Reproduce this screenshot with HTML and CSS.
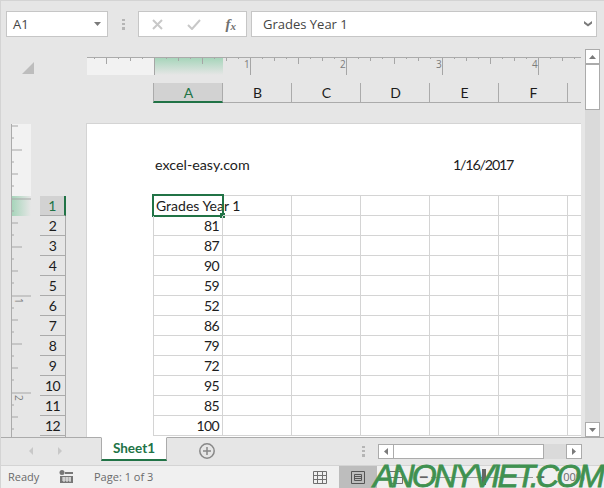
FILE: index.html
```html
<!DOCTYPE html>
<html lang="en">
<head>
<meta charset="utf-8">
<title>excel-easy</title>
<link rel="stylesheet" href="styles.css">
</head>
<body>
<div class="app">
  <div class="formula-bar">
    <div class="name-box"><span>A1</span><svg class="caret" width="7" height="4" viewBox="0 0 7 4"><path d="M0 0h7L3.5 4z"/></svg></div>
    <svg class="grip" width="3" height="11" viewBox="0 0 3 11"><path d="M0 0h3v2H0zM0 4h3v2H0zM0 8h3v3H0z"/></svg>
    <div class="fx-buttons">
      <svg width="11" height="11" viewBox="0 0 11 11"><path d="M1 1l9 9M10 1l-9 9" class="ico-off"/></svg>
      <svg width="14" height="11" viewBox="0 0 14 11"><path d="M1 6l4 4 8-9" class="ico-off"/></svg>
      <span class="fx">f<sub>x</sub></span>
    </div>
    <div class="formula-input"><span>Grades Year 1</span><svg width="8" height="6" viewBox="0 0 8 6"><path d="M0 0l4 3 4-3v2.500l-4 3-4-3z"/></svg></div>
  </div>

  <div class="workspace">
    <div class="corner"><svg width="12" height="12" viewBox="0 0 12 12"><path d="M12 0v12H0z"/></svg></div>
    <div class="h-ruler">
      <svg width="495" height="18" viewBox="0 0 495 18">
        <defs>
          <pattern id="ht" x="68" y="0" width="96" height="18" patternUnits="userSpaceOnUse">
            <path d="M.5 0v18M48.500 0v7M24.500 0v4M72.500 0v4M12.500 0v2M36.500 0v2M60.500 0v2M84.500 0v2" stroke="#a6a6a6" fill="none"/>
          </pattern>
          <linearGradient id="hg" x1="0" y1="0" x2="0" y2="1"><stop offset="0" stop-color="#a3d4b8"/><stop offset="1" stop-color="#e6e6e6"/></linearGradient>
        </defs>
        <rect x="1" y="0" width="67" height="18" fill="#f2f2f2"/>
        <rect x="68" y="0" width="69" height="18" fill="url(#hg)"/>
        <rect x="1" y="0" width="494" height="18" fill="url(#ht)"/>
        <path d="M1 .5h494" stroke="#ababab"/>
        <text x="158" y="11">1</text><text x="254" y="11">2</text><text x="350" y="11">3</text><text x="446" y="11">4</text>
      </svg>
    </div>
    <div class="col-heads">
      <div class="col-head active">A</div><div class="col-head">B</div><div class="col-head">C</div><div class="col-head">D</div><div class="col-head">E</div><div class="col-head">F</div><div class="col-head rest"></div>
    </div>
    <div class="v-ruler">
      <svg width="20" height="314" viewBox="0 0 20 314">
        <defs>
          <pattern id="vt" x="0" y="75.500" width="20" height="97" patternUnits="userSpaceOnUse">
            <path d="M0 .5h20M0 48.500h11M0 24.500h7M0 72.500h7M0 12.500h3M0 36.500h3M0 60.500h3M0 84.500h3" stroke="#a6a6a6" fill="none"/>
          </pattern>
          <linearGradient id="vg"><stop offset="0" stop-color="#a3d4b8"/><stop offset="1" stop-color="#e6e6e6"/></linearGradient>
        </defs>
        <rect x="0" y="1" width="20" height="72" fill="#f2f2f2"/>
        <rect x="0" y="73" width="20" height="20" fill="url(#vg)"/>
        <rect x="0" y="1" width="20" height="313" fill="url(#vt)"/>
        <path d="M.5 1v313" stroke="#ababab"/>
        <text transform="translate(4 175) rotate(90)">1</text>
        <text transform="translate(4 272) rotate(90)">2</text>
      </svg>
    </div>
    <div class="row-heads">
      <div class="row-head active">1</div><div class="row-head">2</div><div class="row-head">3</div><div class="row-head">4</div><div class="row-head">5</div><div class="row-head">6</div><div class="row-head">7</div><div class="row-head">8</div><div class="row-head">9</div><div class="row-head">10</div><div class="row-head">11</div><div class="row-head">12</div><div class="row-head"></div>
    </div>
    <div class="page">
      <div class="page-header"><span class="site">excel-easy.com</span><span class="date">1/16/2017</span></div>
      <div class="sheet">
        <div class="cell title">Grades Year 1<div class="selection"><i class="handle"></i></div></div><div class="cell"></div><div class="cell"></div><div class="cell"></div><div class="cell"></div><div class="cell"></div><div class="cell"></div>
        <div class="cell num">81</div><div class="cell"></div><div class="cell"></div><div class="cell"></div><div class="cell"></div><div class="cell"></div><div class="cell"></div>
        <div class="cell num">87</div><div class="cell"></div><div class="cell"></div><div class="cell"></div><div class="cell"></div><div class="cell"></div><div class="cell"></div>
        <div class="cell num">90</div><div class="cell"></div><div class="cell"></div><div class="cell"></div><div class="cell"></div><div class="cell"></div><div class="cell"></div>
        <div class="cell num">59</div><div class="cell"></div><div class="cell"></div><div class="cell"></div><div class="cell"></div><div class="cell"></div><div class="cell"></div>
        <div class="cell num">52</div><div class="cell"></div><div class="cell"></div><div class="cell"></div><div class="cell"></div><div class="cell"></div><div class="cell"></div>
        <div class="cell num">86</div><div class="cell"></div><div class="cell"></div><div class="cell"></div><div class="cell"></div><div class="cell"></div><div class="cell"></div>
        <div class="cell num">79</div><div class="cell"></div><div class="cell"></div><div class="cell"></div><div class="cell"></div><div class="cell"></div><div class="cell"></div>
        <div class="cell num">72</div><div class="cell"></div><div class="cell"></div><div class="cell"></div><div class="cell"></div><div class="cell"></div><div class="cell"></div>
        <div class="cell num">95</div><div class="cell"></div><div class="cell"></div><div class="cell"></div><div class="cell"></div><div class="cell"></div><div class="cell"></div>
        <div class="cell num">85</div><div class="cell"></div><div class="cell"></div><div class="cell"></div><div class="cell"></div><div class="cell"></div><div class="cell"></div>
        <div class="cell num">100</div><div class="cell"></div><div class="cell"></div><div class="cell"></div><div class="cell"></div><div class="cell"></div><div class="cell"></div>
      </div>
    </div>
    <div class="v-scroll">
      <div class="sb-btn"><svg width="7" height="4" viewBox="0 0 7 4"><path d="M3.500 0L7 4H0z"/></svg></div>
      <div class="sb-thumb"></div>
      <div class="sb-track"></div>
      <div class="sb-btn"><svg width="7" height="4" viewBox="0 0 7 4"><path d="M0 0h7L3.500 4z"/></svg></div>
    </div>
  </div>

  <div class="tabs">
    <div class="tab-nav">
      <svg width="4" height="8" viewBox="0 0 4 8"><path d="M4 0v8L0 4z"/></svg>
      <svg width="4" height="8" viewBox="0 0 4 8"><path d="M0 0v8l4-4z"/></svg>
    </div>
    <div class="tab">Sheet1</div>
    <svg class="add" width="16" height="16" viewBox="0 0 16 16"><circle cx="8" cy="8" r="7.200"/><path d="M8 4v8M4 8h8"/></svg>
    <svg class="grip tab-grip" width="3" height="11" viewBox="0 0 3 11"><path d="M0 0h3v2H0zM0 4h3v2H0zM0 8h3v3H0z"/></svg>
    <div class="h-scroll">
      <div class="hb-btn"><svg width="4" height="7" viewBox="0 0 4 7"><path d="M4 0v7L0 3.500z"/></svg></div>
      <div class="hb-thumb"></div>
      <div class="hb-track"></div>
      <div class="hb-btn"><svg width="4" height="7" viewBox="0 0 4 7"><path d="M0 0v7l4-3.500z"/></svg></div>
    </div>
  </div>

  <div class="status">
    <span class="ready">Ready</span>
    <svg class="macro" width="14" height="13" viewBox="0 0 14 13"><circle cx="3" cy="2.500" r="2.500"/><path d="M6 2h8v2H6zM1 6h13v7H1z"/><path d="M3 8h9M3 10h9M5 7v5M8 7v5M11 7v5" class="macro-lines"/></svg>
    <span class="page-count">Page: 1 of 3</span>
    <div class="views">
      <div class="view"><svg width="14" height="13" viewBox="0 0 14 13"><path d="M.5.500h13v12H.5zM.5 4.500h13M.5 8.500h13M4.500.500v12M9.500.500v12"/></svg></div>
      <div class="view on"><svg width="14" height="13" viewBox="0 0 14 13"><path d="M.5.500h13v12H.5zM3.500 3.500h7v6h-7zM3.500 5.500h7M3.500 7.500h7"/></svg></div>
      <div class="view"><svg width="14" height="13" viewBox="0 0 14 13"><path d="M.5.500h13v12H.5zM7 .500v12M.5 6.500h13"/></svg></div>
    </div>
    <div class="zoom-slider">
      <span class="z-sign">−</span>
      <div class="z-track"><i class="z-thumb"></i></div>
      <span class="z-sign">+</span>
    </div>
    <span class="zoom-val">100%</span>
    <div class="watermark">ANONYVIET.COM</div>
  </div>
</div>
</body>
</html>
```
FILE: styles.css
```css
* { box-sizing: border-box; }
html, body { margin: 0; padding: 0; }
body { background: #e6e6e6; font-family: "Open Sans", sans-serif; overflow: hidden; }
.app { width: 604px; height: 488px; display: flex; flex-direction: column; overflow: hidden; position: relative; border-top: 1px solid #d4d4d4; border-left: 1px solid #d4d4d4; }

.formula-bar { height: 43px; flex: none; display: flex; align-items: flex-start; padding: 10px 6px 0 5px; }
.name-box { width: 102px; height: 26px; background: #fff; border: 1px solid #c6c6c6; display: flex; align-items: center; justify-content: space-between; padding: 0 6px 0 6px; font-size: 13px; color: #444; }
.caret path { fill: #7a7a7a; }
.grip { fill: #b5b5b5; }
.formula-bar > .grip { margin: 8px 13px 0 14px; }
.fx-buttons { width: 109px; height: 26px; background: #fff; border: 1px solid #c6c6c6; display: flex; align-items: center; justify-content: space-between; padding: 0 10px 0 13px; }
.ico-off { stroke: #c8c8c8; stroke-width: 2; fill: none; }
.fx { font-family: "Liberation Serif", serif; font-style: italic; font-weight: bold; font-size: 15px; color: #707070; line-height: 14px; }
.fx sub { font-size: 11px; vertical-align: -1px; line-height: 0; }
.formula-input { width: 346px; height: 26px; margin-left: 4px; background: #fff; border: 1px solid #c6c6c6; display: flex; align-items: center; justify-content: space-between; padding: 0 4px 0 11px; font-size: 13px; color: #444; }
.formula-input path { fill: #7a7a7a; }

.workspace { flex: none; height: 393px; display: grid; overflow: hidden;
  grid-template-columns: 10px 20px 9px 26px 20px 495px 4px 15px;
  grid-template-rows: 13px 18px 8px 20px 20px 314px;
  font-family: Lato, sans-serif; color: #1c1c1c; }
.corner { grid-column: 1 / 6; grid-row: 2 / 4; padding: 5px 0 0 21px; }
.corner svg { display: block; fill: #bdbdbd; }
.h-ruler { grid-column: 6; grid-row: 2; }
.h-ruler svg, .v-ruler svg { display: block; }
.h-ruler text, .v-ruler text { font: 10px "Open Sans", sans-serif; fill: #7c7c7c; }
.col-heads { grid-column: 5 / 7; grid-row: 4; display: flex; padding-left: 87px; height: 20px; }
.col-head { width: 69px; flex: none; text-align: center; font-size: 14px; line-height: 19px; padding-left: 1px; border-right: 1px solid #ababab; border-bottom: 1px solid #ababab; }
.col-head:first-child { width: 70px; border-left: 1px solid #ababab; }
.col-head.rest { width: 13px; border-right: 0; }
.col-head.active { background: #d2d2d2; border-bottom: 2px solid #217346; color: #217346; }
.v-ruler { grid-column: 2; grid-row: 6; }
.row-heads { grid-column: 4; grid-row: 6; padding-top: 73px; }
.row-head { height: 20px; text-align: center; font-size: 14px; line-height: 20px; letter-spacing: -.6px; border-right: 1px solid #ababab; border-bottom: 1px solid #ababab; }
.row-head.active { background: #d2d2d2; border-right: 2px solid #217346; color: #217346; }
.page { grid-column: 6; grid-row: 6; background: #fff; border-top: 1px solid #d4d4d4; border-left: 1px solid #d4d4d4; overflow: hidden; }
.page-header { height: 71px; padding: 32px 0 0 68px; display: flex; font-size: 14.300px; line-height: 18px; }
.site { width: 298px; }
.date { letter-spacing: -1.200px; }
.sheet { margin-left: 66px; display: grid; grid-template-columns: 70px repeat(5, 69px) 13px; grid-auto-rows: 20px; border-top: 1px solid #d4d4d4; font-size: 14px; }
.cell { border-right: 1px solid #d4d4d4; border-bottom: 1px solid #d4d4d4; line-height: 20px; padding: 0 2px; position: relative; white-space: nowrap; }
.cell:nth-child(7n+1) { border-left: 1px solid #d4d4d4; }
.cell:nth-child(7n) { border-right: 0; }
.num { text-align: right; letter-spacing: -.6px; padding-right: 3px; }
.selection { position: absolute; left: -2px; top: -2px; width: 72px; height: 23px; border: 2px solid #217346; }
.handle { position: absolute; right: -3px; bottom: -3px; width: 5px; height: 5px; background: #217346; }
.v-scroll { grid-column: 8; grid-row: 1 / 7; display: flex; flex-direction: column; padding-top: 5px; width: 15px; }
.sb-btn { height: 15px; flex: none; background: #fff; border: 1px solid #ababab; display: flex; align-items: center; justify-content: center; }
.sb-btn path { fill: #7a7a7a; }
.sb-thumb { height: 46px; flex: none; background: #fff; border: 1px solid #ababab; }
.sb-track { flex: 1; background: #dadada; }

.tabs { flex: none; height: 28px; border-top: 1px solid #ababab; display: flex; align-items: flex-start; position: relative; z-index: 1; }
.tab-nav { width: 100px; flex: none; display: flex; gap: 25px; padding: 9px 0 0 28px; fill: #c8c8c8; }
.tab { width: 66px; height: 24px; margin-top: -1px; background: #fff; border: 1px solid #ababab; border-top-color: #fff; border-bottom: 2px solid #217346; text-align: center; font: bold 13.500px/21px Lato, sans-serif; color: #217346; }
.add { margin: 5px 0 0 32px; fill: none; stroke: #888; stroke-width: 1.500; }
.tab-grip { margin: 8px 0 0 147px; }
.h-scroll { margin: 6px 0 0 13px; width: 204px; height: 15px; display: flex; }
.hb-btn { width: 16px; flex: none; background: #fff; border: 1px solid #ababab; display: flex; align-items: center; justify-content: center; }
.hb-btn path { fill: #7a7a7a; }
.hb-thumb { width: 150px; flex: none; background: #fff; border: 1px solid #ababab; border-left: 0; }
.hb-track { flex: 1; background: #dadada; }

.status { flex: none; height: 23px; background: #f0f0f0; border-top: 1px solid #d4d4d4; display: flex; align-items: center; font-size: 11px; color: #6a6a6a; position: relative; }
.ready { width: 58px; padding-left: 7px; padding-bottom: 2px; }
.macro { fill: #777; flex: none; margin-bottom: 2px; }
.macro-lines { stroke: #f0f0f0; stroke-width: 1; fill: none; }
.page-count { margin-left: 21px; width: 207px; padding-bottom: 2px; }
.views { display: flex; height: 22px; }
.view { width: 38px; display: flex; align-items: center; justify-content: center; stroke: #707070; }
.view.on { background: #bdbdbd; stroke: #555; }
.view svg { fill: none; }
.zoom-slider { display: flex; align-items: center; margin-left: 4px; width: 126px; gap: 3px; }
.z-sign { font: bold 16px/16px "Open Sans", sans-serif; color: #666; flex: none; }
.z-track { flex: 1; height: 1px; background: #999; position: relative; }
.z-thumb { position: absolute; left: 50%; top: -8px; width: 4px; height: 16px; background: #666; }
.zoom-val { margin-left: 12px; padding-bottom: 2px; }
.watermark { position: absolute; left: 372px; top: -6px; font: italic 32px/32px "Liberation Sans", sans-serif; letter-spacing: -2.800px; color: #3f9150; -webkit-text-stroke: .8px #3f9150; white-space: nowrap; }
```
